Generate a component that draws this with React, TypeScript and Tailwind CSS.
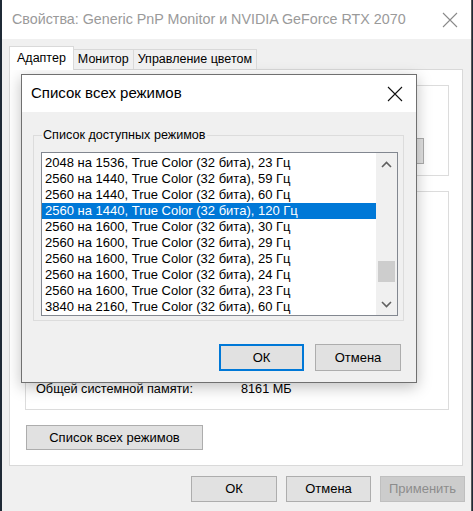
import React from "react";

const modes = [
  "2048 на 1536, True Color (32 бита), 23 Гц",
  "2560 на 1440, True Color (32 бита), 59 Гц",
  "2560 на 1440, True Color (32 бита), 60 Гц",
  "2560 на 1440, True Color (32 бита), 120 Гц",
  "2560 на 1600, True Color (32 бита), 30 Гц",
  "2560 на 1600, True Color (32 бита), 29 Гц",
  "2560 на 1600, True Color (32 бита), 25 Гц",
  "2560 на 1600, True Color (32 бита), 24 Гц",
  "2560 на 1600, True Color (32 бита), 23 Гц",
  "3840 на 2160, True Color (32 бита), 60 Гц",
];

const CloseIcon = ({ color }: { color: string }) => (
  <svg width="16" height="16" viewBox="0 0 16 16">
    <path d="M1 1 L15 15 M15 1 L1 15" stroke={color} strokeWidth="1.1" fill="none" />
  </svg>
);

const Chevron = ({ up }: { up?: boolean }) => (
  <svg width="11" height="7" viewBox="0 0 11 7">
    <path
      d={up ? "M1 6 L5.5 1.5 L10 6" : "M1 1 L5.5 5.5 L10 1"}
      stroke="#606060"
      strokeWidth="1.6"
      fill="none"
    />
  </svg>
);

const Button = ({
  label,
  w,
  h,
  primary,
  disabled,
}: {
  label: string;
  w: string;
  h: string;
  primary?: boolean;
  disabled?: boolean;
}) => (
  <div
    className={`${w} ${h} flex items-center justify-center text-[13px] ${
      primary
        ? "border-2 border-[#0078d7] bg-[#e1e1e1] text-black"
        : disabled
        ? "border border-[#bfbfbf] bg-[#cccccc] text-[#8c8c8c]"
        : "border border-[#adadad] bg-[#e1e1e1] text-black"
    }`}
  >
    {label}
  </div>
);

const ModesDialog = () => (
  <div className="absolute left-[21px] top-[74px] w-[396px] h-[309px] border border-[#707070] bg-[#f0f0f0] shadow-[0_4px_14px_rgba(0,0,0,0.25)] flex flex-col">
    <div className="h-[37px] bg-white flex items-center justify-between pl-[9px] pr-[13px]">
      <span className="text-[15px] text-black">Список всех режимов</span>
      <CloseIcon color="#111" />
    </div>

    <div className="relative mt-[23px] ml-[11px] w-[371px] h-[186px] border border-[#dcdcdc]">
      <span className="absolute left-[8px] -top-[9px] bg-[#f0f0f0] px-[1px] text-[12.6px] leading-[16px] text-black">
        Список доступных режимов
      </span>
      <div className="mt-[16px] ml-[7px] w-[357px] h-[164px] border border-[#828790] bg-white flex">
        <div className="flex-1 pt-[2px] overflow-hidden">
          {modes.map((m, i) => (
            <div
              key={m}
              className={`h-[16px] leading-[16px] pl-[3px] text-[13px] whitespace-nowrap ${
                i === 3 ? "bg-[#0078d7] text-white" : "text-black"
              }`}
            >
              {m}
            </div>
          ))}
        </div>
        <div className="w-[21px] bg-[#f0f0f0] flex flex-col items-center">
          <div className="h-[22px] flex items-center justify-center">
            <Chevron up />
          </div>
          <div className="flex-1 w-full px-[2px] pt-[86px]">
            <div className="h-[21px] bg-[#cdcdcd]" />
          </div>
          <div className="h-[22px] flex items-center justify-center">
            <Chevron />
          </div>
        </div>
      </div>
    </div>

    <div className="flex justify-end gap-[11px] mt-[23px] pr-[15px]">
      <Button label="ОК" w="w-[85px]" h="h-[27px]" primary />
      <Button label="Отмена" w="w-[86px]" h="h-[27px]" />
    </div>
  </div>
);

export default function App() {
  return (
    <div
      className="relative w-[473px] h-[511px] bg-[#1f2a36] overflow-hidden"
      style={{ fontFamily: '"Liberation Sans", Arial, sans-serif' }}
    >
      <div className="ml-[2px] w-[470px] h-full bg-[#f0f0f0] border-r border-[#5a5a5a] flex flex-col">
        <div className="h-[39px] bg-white flex items-center justify-between pl-[10px] pr-[13px]">
          <span className="text-[14.3px] text-[#9a9a9a]">
            Свойства: Generic PnP Monitor и NVIDIA GeForce RTX 2070
          </span>
          <CloseIcon color="#8a8a8a" />
        </div>

        <div className="mt-[7px] ml-[7px] flex items-end h-[23px] relative z-10 text-[12.5px]">
          <div className="h-[24px] -mb-px px-[7px] bg-white border border-b-0 border-[#d9d9d9] flex items-center">
            Адаптер
          </div>
          <div className="h-[20px] px-[4px] bg-[#f0f0f0] border-t border-r border-[#d9d9d9] flex items-center">
            Монитор
          </div>
          <div className="h-[20px] px-[4px] bg-[#f0f0f0] border-t border-r border-[#d9d9d9] flex items-center">
            Управление цветом
          </div>
        </div>

        <div className="ml-[7px] w-[454px] h-[397px] bg-white border border-[#d9d9d9] px-[15px] pt-[15px] flex flex-col">
          <div className="w-[424px] h-[91px] border border-[#dcdcdc] flex flex-col items-end pr-[24px] pt-[52px]">
            <Button label="Свойства" w="w-[85px]" h="h-[26px]" />
          </div>
          <div className="mt-[15px] w-[424px] h-[219px] border border-[#dcdcdc] flex flex-col justify-end pb-[10px] pl-[10px] text-[12.7px] text-black">
            <div className="flex">
              <span className="w-[205px]">Общей системной памяти:</span>
              <span>8161 МБ</span>
            </div>
          </div>
          <div className="mt-[15px] ml-[1px]">
            <Button label="Список всех режимов" w="w-[177px]" h="h-[25px]" />
          </div>
        </div>

        <div className="mt-[10px] flex justify-end gap-[9px] pr-[6px]">
          <Button label="ОК" w="w-[86px]" h="h-[26px]" />
          <Button label="Отмена" w="w-[85px]" h="h-[26px]" />
          <Button label="Применить" w="w-[85px]" h="h-[26px]" disabled />
        </div>
      </div>

      <ModesDialog />
    </div>
  );
}
